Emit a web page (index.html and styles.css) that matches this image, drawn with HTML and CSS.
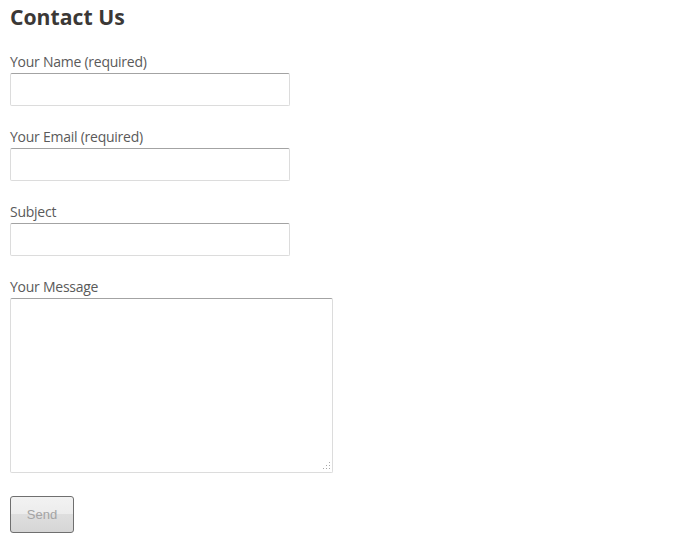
FILE: index.html
```html
<!DOCTYPE html>
<html lang="en">
<head>
  <meta charset="UTF-8" />
  <title>Contact Us</title>
  <link rel="stylesheet" href="styles.css">
</head>
<body>

  <h1>Contact Us</h1>

  <form class="contact-form">
    <div class="field">
      <label for="your-name">Your Name (required)</label>
      <input type="text" id="your-name" />
    </div>

    <div class="field">
      <label for="your-email">Your Email (required)</label>
      <input type="text" id="your-email" />
    </div>

    <div class="field">
      <label for="your-subject">Subject</label>
      <input type="text" id="your-subject" />
    </div>

    <div class="field message-field">
      <label for="your-message">Your Message</label>
      <div class="textarea-wrap">
        <textarea id="your-message"></textarea>
      </div>
    </div>

    <button type="button" class="send-btn">Send</button>
  </form>

</body>
</html>
```

FILE: styles.css
```css
body {
  margin: 0;
  padding: 0 10px;
  background-color: #ffffff;
  color: #5a5a5a;
  font-family: "Open Sans", Arial, sans-serif;
}

h1 {
  margin: 4px 0 23px;
  font-size: 21.2px;
  line-height: 25px;
  font-weight: 700;
  color: #3b3836;
}

.field {
  margin-bottom: 21px;
}

label {
  display: block;
  font-size: 14px;
  line-height: 20px;
  letter-spacing: -0.25px;
  margin-bottom: 1px;
}

input[type="text"], textarea {
  display: block;
  box-sizing: border-box;
  width: 280px;
  height: 33px;
  margin: 0;
  padding: 4px 6px;
  border: 1px solid #dcdcdc;
  border-top-color: #a3a3a3;
  border-radius: 2px;
  background: #fff;
  font-family: "Open Sans", Arial, sans-serif;
  font-size: 14px;
}

.textarea-wrap {
  position: relative;
  width: 323px;
}

textarea {
  width: 323px;
  height: 175px;
  resize: none;
}

/* dotted resize grip */
.textarea-wrap::after {
  content: "";
  position: absolute;
  right: 3px;
  bottom: 4px;
  width: 1px;
  height: 1px;
  background: #a8a8a8;
  box-shadow: -3px 0 #a8a8a8, -6px 0 #a8a8a8, 0 -3px #a8a8a8, -3px -3px #a8a8a8, 0 -6px #a8a8a8;
}

.message-field {
  margin-bottom: 23px;
}

.send-btn {
  display: block;
  width: 64px;
  height: 37px;
  margin: 0;
  padding: 0;
  border: 1px solid #6f6f6f;
  border-radius: 3px;
  background: linear-gradient(#f2f2f2 0%, #ececec 50%, #dedede 50%, #d6d6d6 100%);
  color: #a4a4a4;
  font-family: "Liberation Sans", Arial, sans-serif;
  font-size: 13px;
  cursor: pointer;
}
```
